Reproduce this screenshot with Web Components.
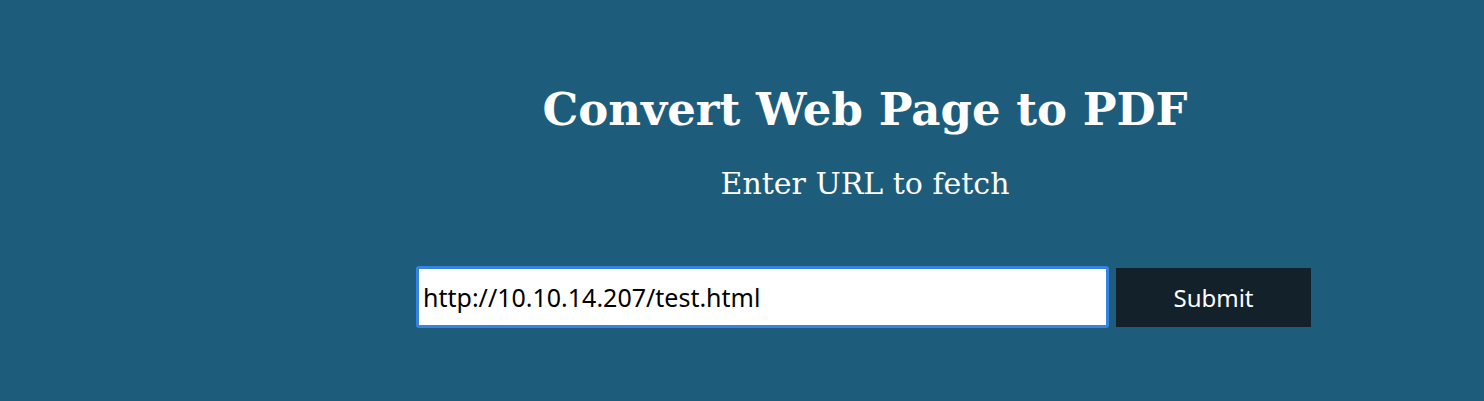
<!DOCTYPE html>
<html lang="en">
<head>
<meta charset="utf-8">
<title>Convert Web Page to PDF</title>
<style>
html, body { margin: 0; min-height: 100%; background: #1e5c7b; }
</style>
</head>
<body>
<pdf-page>
  <h1 slot="title">Convert Web Page to PDF</h1>
  <url-form value="http://10.10.14.207/test.html">Enter URL to fetch</url-form>
</pdf-page>
<template id="page-template">
<style>
:host { display: block; padding: 82px 0 72px 246px; color: #fff; font-family: "DejaVu Serif", serif; text-align: center; }
::slotted(h1) { margin: 0 0 28px; font-size: 45px; line-height: 56px; font-weight: bold; }
@media (max-width: 1200px) { :host { padding-left: 16px; padding-right: 16px; } }
</style>
<slot name="title"></slot>
<slot></slot>
</template>
<template id="form-template">
<style>
:host { display: block; }
form { display: flex; flex-direction: column; align-items: center; gap: 64px; }
label { font-size: 30px; line-height: 36px; }
.row { display: flex; align-items: stretch; gap: 7px; max-width: 100%; margin-right: 3px; }
input, button { box-sizing: border-box; margin: 0; font-family: "Noto Sans", sans-serif; line-height: 36px; }
input { flex: 0 1 693px; width: 693px; min-width: 0; padding: 10px 4px; border: 3px solid #3584e4; border-radius: 3px; background: #fff; color: #000; font-size: 25px; outline: none; }
button { flex: none; width: 195px; margin: 2px 0 1px; padding: 0; border: 0; background: #13212a; color: #fff; font-size: 24px; }
</style>
<form>
  <label for="url"><slot></slot></label>
  <div class="row"><input id="url" type="text"><button type="submit">Submit</button></div>
</form>
</template>
<script>
customElements.define("pdf-page", class extends HTMLElement {
  constructor() {
    super();
    this.attachShadow({ mode: "open" }).append(document.getElementById("page-template").content.cloneNode(true));
  }
});
customElements.define("url-form", class extends HTMLElement {
  constructor() {
    super();
    this.attachShadow({ mode: "open" }).append(document.getElementById("form-template").content.cloneNode(true));
    this.shadowRoot.querySelector("input").value = this.getAttribute("value") || "";
    this.shadowRoot.querySelector("form").addEventListener("submit", e => e.preventDefault());
  }
});
</script>
</body>
</html>
